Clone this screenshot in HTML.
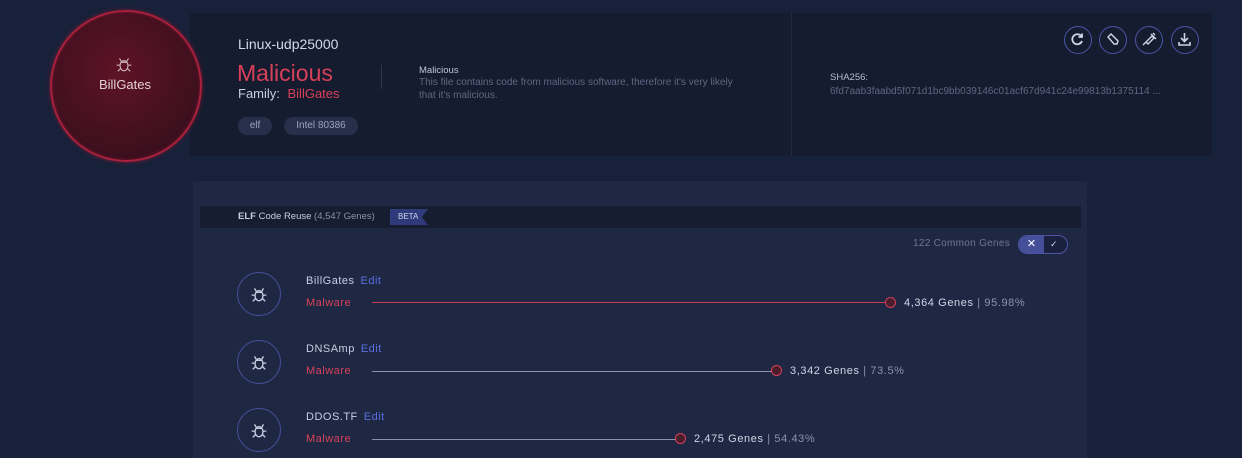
<!DOCTYPE html>
<html><head><style>
*{margin:0;padding:0;box-sizing:border-box}
body{width:1242px;height:458px;background:#18213a;font-family:"Liberation Sans",sans-serif;position:relative;overflow:hidden;color:#c8cde0}
.a{position:absolute}
.top{left:190px;top:13px;width:1022px;height:143px;background:#151c2f}
.circle{left:50px;top:10px;width:152px;height:152px;border-radius:50%;background:radial-gradient(circle at 45% 40%,#5e1326,#3a0f1d 75%);border:2px solid #a8203c;box-shadow:0 0 4px #7a1830,inset 0 0 3px #7a1830}
.pill{height:18px;border-radius:9px;background:#27304a;font-size:10px;color:#9aa2bc;text-align:center;line-height:18px}
.btn{width:28px;height:28px;border-radius:50%;border:1.5px solid #4a55a8;top:26px}
.panel{left:193px;top:181px;width:894px;height:277px;background:#1f2843}
.bar{left:200px;top:206px;width:881px;height:22px;background:#161d31}
.ic{width:44px;height:44px;border-radius:50%;border:1.5px solid #46509a;left:237px}
.nm{font-size:11px;color:#c8cde0;left:306px;letter-spacing:.5px}
.nm span{color:#5a6ee0;margin-left:6px}
.mw{font-size:11px;color:#d8405a;left:306px;letter-spacing:.5px}
.ln{height:1px;background:#c83a52;left:372px}
.dot{width:11px;height:11px;border-radius:50%;border:1.5px solid #d8405a;background:#4a1d2c}
.gn{font-size:11px;color:#d0d4e4;letter-spacing:.6px}
.gn span{color:#8a92ac}
</style></head><body>
<div class="a top"></div>
<div class="a" style="left:791px;top:13px;width:1px;height:143px;background:#222a40"></div>
<div class="a circle"></div>
<svg class="a" style="left:115px;top:55px" width="18" height="18" viewBox="0 0 16 16" fill="none" stroke="#d8c0c8" stroke-width="0.9"><ellipse cx="8" cy="9.5" rx="3.5" ry="4.5"/><path d="M5.5 5.5 L4 3 M10.5 5.5 L12 3 M4.5 9 H1.5 M11.5 9 H14.5 M5 12 L2.5 14.5 M11 12 L13.5 14.5 M5 6.5 H11"/></svg>
<div class="a" style="left:50px;width:150px;top:77px;text-align:center;font-size:13px;color:#e4d0d6">BillGates</div>
<div class="a" style="left:238px;top:36px;font-size:14px;color:#d4d8e6">Linux-udp25000</div>
<div class="a" style="left:237px;top:60px;font-size:23px;color:#d8405a">Malicious</div>
<div class="a" style="left:238px;top:86px;font-size:13px;color:#c8cde0">Family: <span style="color:#d8405a;margin-left:4px">BillGates</span></div>
<div class="a" style="left:381px;top:65px;width:1px;height:24px;background:#2e364e"></div>
<div class="a" style="left:419px;top:65px;font-size:9.5px;color:#c0c6d8">Malicious</div>
<div class="a" style="left:419px;top:77px;font-size:10px;color:#5e6684;width:330px;line-height:12.5px">This file contains code from malicious software, therefore it's very likely that it's malicious.</div>
<div class="a pill" style="left:238px;top:117px;width:34px">elf</div>
<div class="a pill" style="left:284px;top:117px;width:74px">Intel 80386</div>
<div class="a" style="left:830px;top:72px;font-size:9.5px;color:#b8bed0">SHA256:</div>
<div class="a" style="left:830px;top:86px;font-size:10px;color:#5e6684">6fd7aab3faabd5f071d1bc9bb039146c01acf67d941c24e99813b1375114 ...</div>
<div class="a btn" style="left:1064px"><svg width="25" height="25" viewBox="0 0 25 25" fill="none" stroke="#d0d4e4" stroke-width="1.8"><path d="M16.5 9.5 A5 5 0 1 0 17 14"/><path d="M17 6.5 V10 H13.5"/></svg></div>
<div class="a btn" style="left:1099px"><svg width="25" height="25" viewBox="0 0 25 25" fill="none" stroke="#d0d4e4" stroke-width="1.4"><path d="M8 10 L11 7 L18 14 L17 17 L14 17 Z"/></svg></div>
<div class="a btn" style="left:1135px"><svg width="25" height="25" viewBox="0 0 25 25" fill="none" stroke="#d0d4e4" stroke-width="1.4"><path d="M7 18 L10 15 M10 15 L16 9 L18 11 L12 17 Z M15 7 L20 12 M17 6 L19 8"/></svg></div>
<div class="a btn" style="left:1171px"><svg width="25" height="25" viewBox="0 0 25 25" fill="none" stroke="#d0d4e4" stroke-width="1.6"><path d="M12.5 6 V14 M9 11 L12.5 14.5 L16 11 M7 15 V18 H18 V15"/></svg></div>
<div class="a panel"></div>
<div class="a bar"></div>
<div class="a" style="left:238px;top:211px;font-size:9.5px;color:#c8cde0"><b>ELF</b> Code Reuse <span style="color:#8a92ac">(4,547 Genes)</span></div>
<div class="a" style="left:390px;top:209px;width:38px;height:16px;background:#2e3a7a;clip-path:polygon(0 0,100% 0,84% 50%,100% 100%,0 100%);font-size:8px;color:#d0d4ec;line-height:16px;padding-left:8px">BETA</div>
<div class="a" style="left:913px;top:238px;font-size:10px;color:#6e768e;letter-spacing:.3px">122 Common Genes</div>
<div class="a" style="left:1018px;top:235px;width:50px;height:19px;border-radius:10px;border:1.5px solid #4a55a8;background:#1a2140;overflow:hidden"><div style="width:25px;height:100%;background:#46509a;color:#fff;font-size:11px;text-align:center;line-height:16px">✕</div><div class="a" style="left:31px;top:0;color:#d0d4e4;font-size:9px;line-height:16px">✓</div></div>

<div class="a ic" style="top:272px"></div>
<div class="a ic" style="top:340px"></div>
<div class="a ic" style="top:408px"></div>
<svg class="a" style="left:250px;top:285px" width="18" height="18" viewBox="0 0 16 16" fill="none" stroke="#c8cde0" stroke-width="1.2"><ellipse cx="8" cy="9.5" rx="3.5" ry="4.5"/><path d="M5.5 5.5 L4 3 M10.5 5.5 L12 3 M4.5 9 H1.5 M11.5 9 H14.5 M5 12 L2.5 14.5 M11 12 L13.5 14.5 M5 6.5 H11"/></svg>
<svg class="a" style="left:250px;top:353px" width="18" height="18" viewBox="0 0 16 16" fill="none" stroke="#c8cde0" stroke-width="1.2"><ellipse cx="8" cy="9.5" rx="3.5" ry="4.5"/><path d="M5.5 5.5 L4 3 M10.5 5.5 L12 3 M4.5 9 H1.5 M11.5 9 H14.5 M5 12 L2.5 14.5 M11 12 L13.5 14.5 M5 6.5 H11"/></svg>
<svg class="a" style="left:250px;top:421px" width="18" height="18" viewBox="0 0 16 16" fill="none" stroke="#c8cde0" stroke-width="1.2"><ellipse cx="8" cy="9.5" rx="3.5" ry="4.5"/><path d="M5.5 5.5 L4 3 M10.5 5.5 L12 3 M4.5 9 H1.5 M11.5 9 H14.5 M5 12 L2.5 14.5 M11 12 L13.5 14.5 M5 6.5 H11"/></svg>

<div class="a nm" style="top:275px">BillGates<span>Edit</span></div>
<div class="a mw" style="top:297px">Malware</div>
<div class="a ln" style="top:302px;width:514px"></div>
<div class="a dot" style="left:885px;top:297px"></div>
<div class="a gn" style="left:904px;top:297px">4,364 Genes <span>| 95.98%</span></div>

<div class="a nm" style="top:343px">DNSAmp<span>Edit</span></div>
<div class="a mw" style="top:365px">Malware</div>
<div class="a ln" style="top:371px;width:400px;background:#8a90b0"></div>
<div class="a dot" style="left:771px;top:365px"></div>
<div class="a gn" style="left:790px;top:365px">3,342 Genes <span>| 73.5%</span></div>

<div class="a nm" style="top:411px">DDOS.TF<span>Edit</span></div>
<div class="a mw" style="top:433px">Malware</div>
<div class="a ln" style="top:439px;width:304px;background:#8a90b0"></div>
<div class="a dot" style="left:675px;top:433px"></div>
<div class="a gn" style="left:694px;top:433px">2,475 Genes <span>| 54.43%</span></div>
</body></html>
